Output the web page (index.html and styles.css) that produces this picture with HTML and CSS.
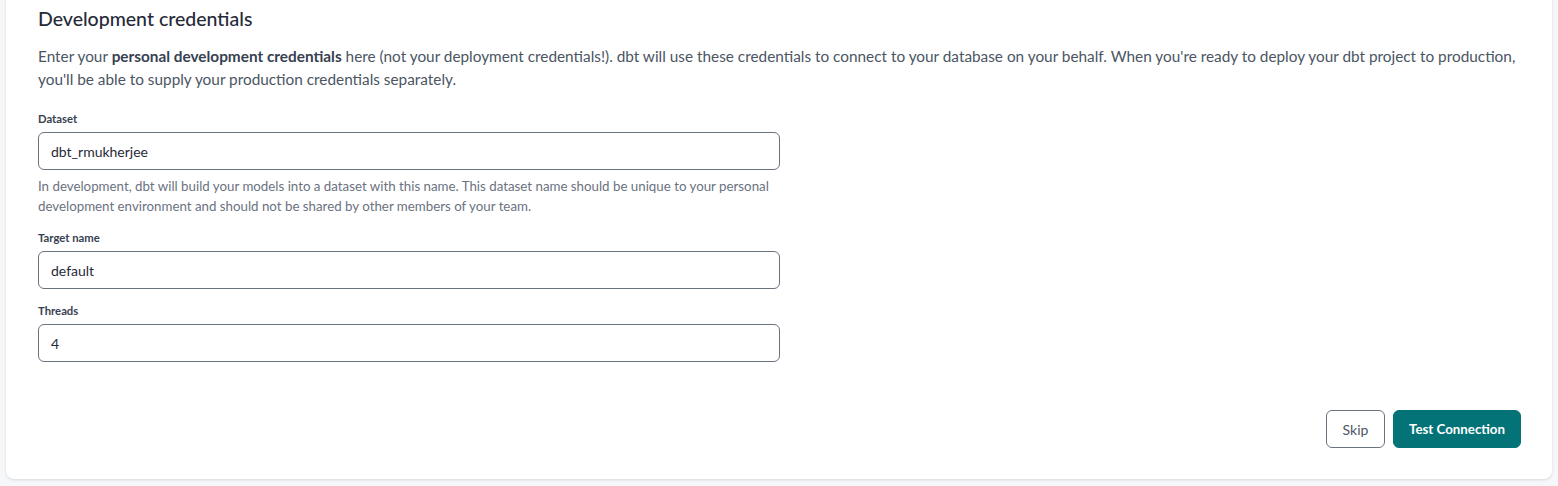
FILE: index.html
```html
<!DOCTYPE html>
<html>
<head>
<meta charset="utf-8">
<link rel="stylesheet" href="styles.css">
</head>
<body>
<div class="page">
  <section class="card">
    <h2 class="title">Development credentials</h2>
    <p class="intro">Enter your <strong>personal development credentials</strong> here (not your deployment credentials!). dbt will use these credentials to connect to your database on your behalf. When you're ready to deploy your dbt project to production, you'll be able to supply your production credentials separately.</p>
    <div class="fields">
      <div class="field">
        <label class="label">Dataset</label>
        <div class="input">dbt_rmukherjee</div>
        <p class="help">In development, dbt will build your models into a dataset with this name. This dataset name should be unique to your personal development environment and should not be shared by other members of your team.</p>
      </div>
      <div class="field">
        <label class="label">Target name</label>
        <div class="input">default</div>
      </div>
      <div class="field">
        <label class="label">Threads</label>
        <div class="input">4</div>
      </div>
    </div>
    <div class="actions">
      <button class="btn btn-secondary">Skip</button>
      <button class="btn btn-primary">Test Connection</button>
    </div>
  </section>
</div>
</body>
</html>
```
FILE: styles.css
```css
* { box-sizing: border-box; }
html, body { margin: 0; padding: 0; }
body {
  background: #f6f7f9;
  font-family: "Lato", "Liberation Sans", sans-serif;
  color: #374151;
  height: 486px;
  overflow: hidden;
}
.page {
  padding: 0 6px;
  margin-top: -10px;
}
.card {
  background: #ffffff;
  border-radius: 0 0 8px 8px;
  box-shadow: 0 1px 3px rgba(0,0,0,0.12);
  padding: 16px 31px 31px 32px;
  height: 489px;
  display: flex;
  flex-direction: column;
}
.title {
  margin: 1px 0 0;
  font-size: 19.5px;
  font-weight: 500;
  color: #262a38;
  line-height: 24px;
}
.intro {
  margin: 14px 0 0;
  font-size: 15.35px;
  line-height: 23px;
  color: #4b5563;
}
.intro strong { color: #374151; font-weight: 700; }
.fields {
  width: 742px;
  margin-top: 21px;
  display: flex;
  flex-direction: column;
  gap: 15px;
}
.field { display: flex; flex-direction: column; }
.label {
  font-size: 11.3px;
  font-weight: 700;
  color: #374151;
  line-height: 14px;
  margin-bottom: 6px;
}
.input {
  height: 38px;
  border: 1px solid #6b7280;
  border-radius: 6px;
  padding: 0 12px;
  display: flex;
  align-items: center;
  font-size: 14px;
  color: #262a38;
}
.help {
  margin: 6px 0 0;
  font-size: 13.3px;
  line-height: 20px;
  color: #6b7280;
}
.actions {
  margin-top: auto;
  display: flex;
  justify-content: flex-end;
  gap: 8px;
}
.btn {
  height: 38px;
  border-radius: 6px;
  font-family: inherit;
  font-size: 14px;
  padding: 0 16px;
  cursor: pointer;
}
.btn-secondary {
  background: #fff;
  border: 1px solid #6b7280;
  color: #4b5563;
  width: 59px;
  padding: 0;
}
.btn-primary {
  background: #047377;
  border: 1px solid #047377;
  color: #fff;
  font-weight: 700;
  font-size: 13.3px;
  width: 128px;
  padding: 0;
}
```
